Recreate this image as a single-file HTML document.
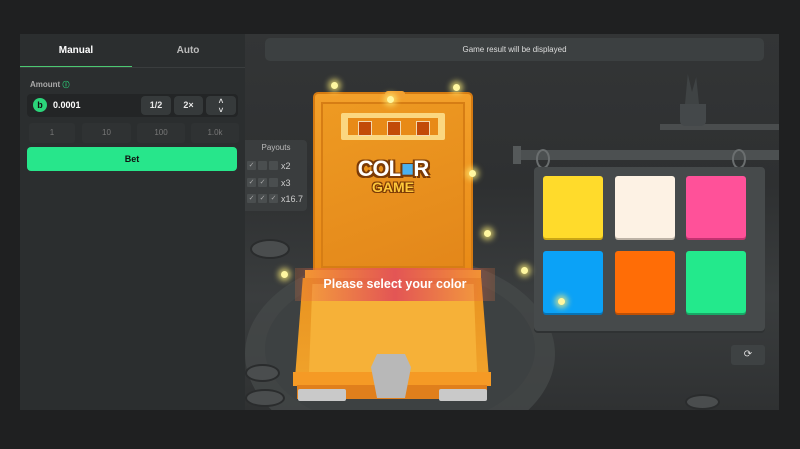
<!DOCTYPE html>
<html><head><meta charset="utf-8"><style>
*{margin:0;padding:0;box-sizing:border-box}
body{width:800px;height:449px;background:#1f2021;font-family:"Liberation Sans",sans-serif;position:relative;overflow:hidden}
.abs{position:absolute}
.lp{left:20px;top:34px;width:225px;height:376px;background:#2b2e2f}
.tab{top:0;height:33px;width:112px;text-align:center;line-height:33px;font-size:10px;font-weight:bold}
.btn{background:#363a3b;border-radius:4px;color:#e8e8e8;font-size:9px;font-weight:bold;text-align:center}
.q{top:120px;height:20px;width:38px;background:#2f3233;border-radius:3px;color:#777;font-size:8px;text-align:center;line-height:20px}
.game{left:245px;top:34px;width:534px;height:376px;background:linear-gradient(#333536,#2e3031 40%,#3a3d3e 70%,#2f3132);overflow:hidden}
.sq{width:60px;height:62px;border-radius:3px}
.chk{width:9px;height:9px;background:#4a4e4f;border-radius:1px;color:#aaa;font-size:7px;line-height:9px;text-align:center}
.light{width:7px;height:7px;border-radius:50%;background:#fff7a0;box-shadow:0 0 6px 3px rgba(255,240,120,.7)}
</style></head><body>
<div class="abs lp">
 <div class="abs tab" style="left:0;color:#fff">Manual</div>
 <div class="abs tab" style="left:112px;color:#bbb">Auto</div>
 <div class="abs" style="left:0;top:32px;width:112px;height:2px;background:#4cc872"></div>
 <div class="abs" style="left:0;top:33px;width:225px;height:1px;background:#3a3d3e"></div>
 <div class="abs" style="left:10px;top:46px;font-size:8px;font-weight:bold;color:#aaa">Amount <span style="color:#2bd47a;font-size:7px">ⓘ</span></div>
 <div class="abs" style="left:7px;top:60px;width:211px;height:23px;background:#232526;border-radius:4px"></div>
 <div class="abs" style="left:13px;top:64px;width:14px;height:14px;border-radius:50%;background:#2bd47a;color:#111;font-size:9px;font-weight:bold;text-align:center;line-height:14px">b</div>
 <div class="abs" style="left:33px;top:66px;font-size:9px;font-weight:bold;color:#fff">0.0001</div>
 <div class="abs btn" style="left:121px;top:62px;width:30px;height:19px;line-height:19px">1/2</div>
 <div class="abs btn" style="left:154px;top:62px;width:29px;height:19px;line-height:19px">2×</div>
 <div class="abs btn" style="left:186px;top:62px;width:30px;height:19px;line-height:9px;font-size:8px;padding-top:1px">˄<br>˅</div>
 <div class="q abs" style="left:9px;top:89px;width:46px">1</div>
 <div class="q abs" style="left:62px;top:89px;width:49px">10</div>
 <div class="q abs" style="left:117px;top:89px;width:48px">100</div>
 <div class="q abs" style="left:171px;top:89px;width:48px">1.0k</div>
 <div class="abs" style="left:7px;top:113px;width:210px;height:24px;background:#27e68b;border-radius:4px;text-align:center;line-height:24px;font-size:9px;font-weight:bold;color:#111">Bet</div>
</div>
<div class="abs game">
 <div class="abs" style="left:20px;top:4px;width:499px;height:23px;background:#3c4041;border-radius:5px;color:#ddd;font-size:8px;text-align:center;line-height:23px">Game result will be displayed</div>
 <div class="abs" style="left:0;top:220px;width:310px;height:200px;border-radius:50%;background:#454849;opacity:.8"></div>
 <div class="abs" style="left:20px;top:235px;width:270px;height:160px;border-radius:50%;background:#3d4142"></div>
 <div class="abs" style="left:5px;top:205px;width:40px;height:20px;border-radius:50%;background:#4a4d4e;border:2px solid #2a2c2d"></div>
 <div class="abs" style="left:0;top:330px;width:35px;height:18px;border-radius:50%;background:#4a4d4e;border:2px solid #2a2c2d"></div>
 <div class="abs" style="left:0;top:355px;width:40px;height:18px;border-radius:50%;background:#4a4d4e;border:2px solid #2a2c2d"></div>
 <div class="abs" style="left:440px;top:360px;width:35px;height:16px;border-radius:50%;background:#4a4d4e;border:2px solid #2a2c2d"></div>
 <div class="abs" style="left:415px;top:90px;width:119px;height:6px;background:#4a4d4e"></div>
 <div class="abs" style="left:435px;top:70px;width:26px;height:22px;background:#44484a;border-radius:0 0 5px 5px"></div>
 <div class="abs" style="left:440px;top:40px;width:14px;height:30px;background:#3f4344;clip-path:polygon(0 100%,20% 0,50% 60%,80% 10%,100% 100%)"></div>
 <div class="abs" style="left:270px;top:116px;width:264px;height:10px;background:#4c5051"></div>
 <div class="abs" style="left:268px;top:112px;width:8px;height:18px;background:#55595a"></div>
 <div class="abs" style="left:291px;top:115px;width:14px;height:20px;border:2px solid #6a6e6f;border-radius:50%"></div>
 <div class="abs" style="left:487px;top:115px;width:14px;height:20px;border:2px solid #6a6e6f;border-radius:50%"></div>
 <div class="abs" style="left:289px;top:133px;width:231px;height:164px;background:#464a4b;border-radius:4px;box-shadow:0 2px 0 #2f3233"></div>
 <div class="abs sq" style="left:298px;top:142px;background:#ffdb2b;box-shadow:0 2px 0 #c9a515"></div>
 <div class="abs sq" style="left:370px;top:142px;background:#fdf2e4;box-shadow:0 2px 0 #bdb3a6"></div>
 <div class="abs sq" style="left:441px;top:142px;background:#ff5199;box-shadow:0 2px 0 #c23270"></div>
 <div class="abs sq" style="left:298px;top:217px;background:#0ba2f7;box-shadow:0 2px 0 #0773b5"></div>
 <div class="abs sq" style="left:370px;top:217px;background:#ff6d06;box-shadow:0 2px 0 #bf5004"></div>
 <div class="abs sq" style="left:441px;top:217px;background:#23e98c;box-shadow:0 2px 0 #18a866"></div>
 <div class="abs" style="left:486px;top:311px;width:34px;height:20px;background:#3e4243;border-radius:3px;color:#ddd;font-size:10px;text-align:center;line-height:20px">⟳</div>
 <!-- lid -->
 <div class="abs" style="left:68px;top:58px;width:160px;height:180px;background:linear-gradient(#f3a02a,#e98b17);border-radius:5px 5px 0 0;border:2px solid #d47a12"></div>
 <div class="abs" style="left:140px;top:57px;width:20px;height:8px;background:#f2a030;border-radius:3px"></div>
 <div class="abs" style="left:76px;top:68px;width:144px;height:166px;background:linear-gradient(160deg,#ee9a22,#e3871a);border:2px solid #d67d14"></div>
 <div class="abs" style="left:96px;top:79px;width:104px;height:27px;background:#fbd780;border-radius:2px"></div>
 <div class="abs" style="left:103px;top:84px;width:90px;height:17px;background:#e88a17"></div>
 <div class="abs" style="left:113px;top:87px;width:14px;height:15px;background:#c24a08;border:1px solid #f3d9b0"></div>
 <div class="abs" style="left:142px;top:87px;width:14px;height:15px;background:#c24a08;border:1px solid #f3d9b0"></div>
 <div class="abs" style="left:171px;top:87px;width:14px;height:15px;background:#c24a08;border:1px solid #f3d9b0"></div>
 <div class="abs" style="left:98px;top:122px;width:100px;text-align:center;font-size:22px;font-weight:900;color:#fff;text-shadow:2px 2px 0 #7a3a06,-2px -1px 0 #7a3a06,2px -1px 0 #7a3a06,-2px 2px 0 #7a3a06;letter-spacing:-1px">COL<span style="color:#4ab0ee">■</span>R</div>
 <div class="abs" style="left:98px;top:145px;width:100px;text-align:center;font-size:14px;font-weight:900;color:#ffc83a;text-shadow:1px 1px 0 #7a3a06,-1px -1px 0 #7a3a06,1px -1px 0 #7a3a06,-1px 1px 0 #7a3a06">GAME</div>
 <!-- bottom -->
 <div class="abs" style="left:60px;top:236px;width:176px;height:10px;background:#f5a52c"></div>
 <div class="abs" style="left:50px;top:244px;width:194px;height:100px;background:linear-gradient(#e8921f,#f0a22b);clip-path:polygon(4% 0,96% 0,100% 100%,0 100%)"></div>
 <div class="abs" style="left:64px;top:250px;width:168px;height:88px;background:#f6b138;clip-path:polygon(2% 0,98% 0,100% 100%,0 100%)"></div>
 <div class="abs" style="left:48px;top:338px;width:198px;height:14px;background:#f59a25"></div>
 <div class="abs" style="left:52px;top:351px;width:190px;height:14px;background:#e07f1c"></div>
 <div class="abs" style="left:53px;top:355px;width:48px;height:12px;background:#c9c9c9;border-radius:2px"></div>
 <div class="abs" style="left:194px;top:355px;width:48px;height:12px;background:#c9c9c9;border-radius:2px"></div>
 <div class="abs" style="left:126px;top:320px;width:40px;height:44px;background:#b8b8b8;clip-path:polygon(15% 0,85% 0,100% 30%,85% 100%,15% 100%,0 30%)"></div>
 <div class="abs" style="left:50px;top:234px;width:200px;height:33px;background:linear-gradient(90deg,rgba(240,120,60,.2),#e35555 50%,rgba(240,120,60,.2));color:#fff;font-size:12.5px;font-weight:bold;text-align:center;line-height:33px">Please select your color</div>
 <div class="abs" style="left:0;top:106px;width:62px;height:71px;background:#3a3d3e;border-radius:0 4px 4px 0"></div>
 <div class="abs" style="left:0;top:109px;width:62px;text-align:center;font-size:8px;color:#bbb">Payouts</div>
 <div class="abs chk" style="left:2px;top:127px">✓</div><div class="abs chk" style="left:13px;top:127px"></div><div class="abs chk" style="left:24px;top:127px"></div>
 <div class="abs chk" style="left:2px;top:144px">✓</div><div class="abs chk" style="left:13px;top:144px">✓</div><div class="abs chk" style="left:24px;top:144px"></div>
 <div class="abs chk" style="left:2px;top:160px">✓</div><div class="abs chk" style="left:13px;top:160px">✓</div><div class="abs chk" style="left:24px;top:160px">✓</div>
 <div class="abs" style="left:36px;top:127px;font-size:9px;color:#ccc">x2</div>
 <div class="abs" style="left:36px;top:144px;font-size:9px;color:#ccc">x3</div>
 <div class="abs" style="left:36px;top:160px;font-size:9px;color:#ccc">x16.7</div>
 <div class="abs light" style="left:86px;top:48px"></div>
 <div class="abs light" style="left:208px;top:50px"></div>
 <div class="abs light" style="left:142px;top:62px"></div>
 <div class="abs light" style="left:224px;top:136px"></div>
 <div class="abs light" style="left:239px;top:196px"></div>
 <div class="abs light" style="left:36px;top:237px"></div>
 <div class="abs light" style="left:276px;top:233px"></div>
 <div class="abs light" style="left:313px;top:264px"></div>
</div>
</body></html>
